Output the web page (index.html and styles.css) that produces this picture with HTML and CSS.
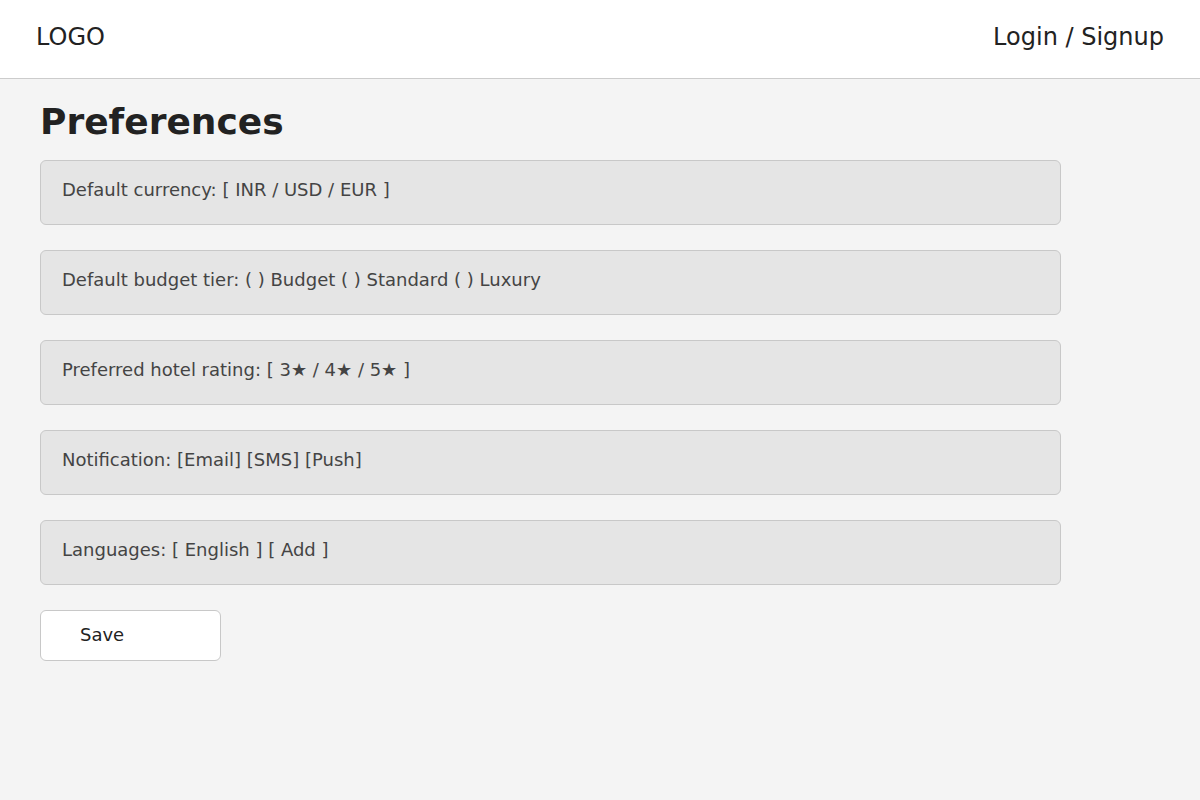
FILE: index.html
```html
<!DOCTYPE html>
<html>
<head>
<meta charset="utf-8">
<link rel="stylesheet" href="styles.css">
</head>
<body>
<header class="topbar">
  <div class="logo">LOGO</div>
  <div class="auth">Login / Signup</div>
</header>
<main class="page">
  <h1 class="title">Preferences</h1>
  <div class="card">Default currency: [ INR / USD / EUR ]</div>
  <div class="card">Default budget tier: ( ) Budget ( ) Standard ( ) Luxury</div>
  <div class="card">Preferred hotel rating: [ 3★ / 4★ / 5★ ]</div>
  <div class="card">Notification: [Email] [SMS] [Push]</div>
  <div class="card">Languages: [ English ] [ Add ]</div>
  <button class="save">Save</button>
</main>
</body>
</html>
```
FILE: styles.css
```css
* { box-sizing: border-box; }
html, body { margin: 0; padding: 0; }
body {
  background: #f4f4f4;
  font-family: "DejaVu Sans", sans-serif;
  color: #222;
  min-height: 800px;
}
.topbar {
  height: 79px;
  background: #fff;
  border-bottom: 1px solid #ccc;
  display: flex;
  align-items: center;
  justify-content: space-between;
  padding: 0 36px 4px 36px;
  font-size: 24px;
  color: #222;
}
.page {
  padding: 21px 40px 0 40px;
  display: flex;
  flex-direction: column;
  align-items: flex-start;
}
.title {
  font-size: 36px;
  font-weight: bold;
  margin: 0 0 16px 0;
  line-height: 44px;
  color: #222;
}
.card {
  width: 1021px;
  height: 65px;
  background: #e5e5e5;
  border: 1px solid #c8c8c8;
  border-radius: 6px;
  padding: 18px 21px 16px 21px;
  font-size: 18px;
  line-height: 22px;
  color: #444;
  margin-bottom: 25px;
}
.save {
  width: 181px;
  height: 51px;
  background: #fff;
  border: 1px solid #c8c8c8;
  border-radius: 6px;
  font-family: "DejaVu Sans", sans-serif;
  font-size: 18px;
  color: #222;
  text-align: left;
  padding: 0 0 2px 39px;
}
```
